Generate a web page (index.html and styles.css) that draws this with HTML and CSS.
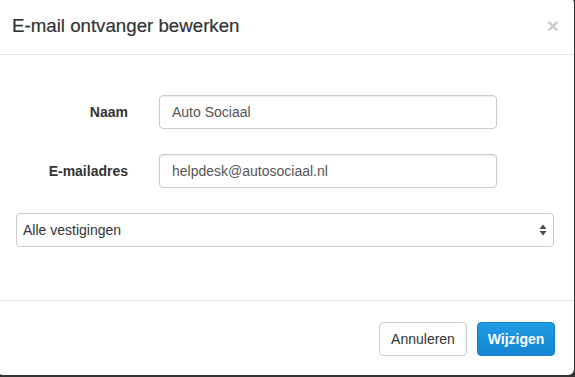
FILE: index.html
```html
<!DOCTYPE html>
<html lang="nl">
<head>
    <meta charset="UTF-8">
    <meta name="viewport" content="width=device-width, initial-scale=1.0">
    <title>E-mail ontvanger bewerken</title>
    <link rel="stylesheet" href="styles.css">
</head>
<body>
    <div class="modal">
        <div class="modal-header">
            <h4 class="modal-title">E-mail ontvanger bewerken</h4>
            <button class="close" type="button">&times;</button>
        </div>

        <div class="modal-body">
            <div class="form-row">
                <label for="naam">Naam</label>
                <input type="text" id="naam" value="Auto Sociaal">
            </div>

            <div class="form-row">
                <label for="email">E-mailadres</label>
                <input type="text" id="email" value="helpdesk@autosociaal.nl">
            </div>

            <div class="select-wrap">
                <select id="vestiging">
                    <option>Alle vestigingen</option>
                </select>
                <svg class="select-arrows" width="8" height="12" viewBox="0 0 8 12">
                    <path d="M4 0.5 L7.5 5 L0.5 5 Z" fill="#4a4a4a"/>
                    <path d="M4 11.5 L7.5 7 L0.5 7 Z" fill="#4a4a4a"/>
                </svg>
            </div>
        </div>

        <div class="modal-footer">
            <button class="btn btn-default" type="button">Annuleren</button>
            <button class="btn btn-primary" type="button">Wijzigen</button>
        </div>
    </div>
</body>
</html>
```

FILE: styles.css
```css
*{
    margin: 0;
    padding: 0;
    box-sizing: border-box;
}
body {
    font-family: "Liberation Sans", Arial, sans-serif;
    font-size: 14px;
    color: #333;
    background-color: #333;
    overflow: hidden;
}

.modal{
    width: 577px;
    margin: -3px 0 0 -3px;
    background-color: #fff;
    border-radius: 6px;
}

.modal-header{
    display: flex;
    justify-content: space-between;
    align-items: center;
    padding: 16px 15px 15px 15px;
    border-bottom: 1px solid #e5e5e5;
}
.modal-title{
    font-size: 18.7px;
    font-weight: 500;
    line-height: 26px;
    color: #333;
    -webkit-text-stroke: 0.2px #333;
}
.close{
    background: none;
    border: 0;
    font-family: "Liberation Sans", Arial, sans-serif;
    font-size: 21px;
    font-weight: 700;
    line-height: 1;
    color: #000;
    opacity: .2;
    margin-top: -2px;
}

.modal-body{
    padding: 40px 20px 53px 19px;
}
.form-row{
    display: grid;
    grid-template-columns: 128px 338px;
    column-gap: 15px;
    align-items: center;
    margin-bottom: 25px;
}
.form-row label{
    text-align: right;
    padding-right: 16px;
    font-weight: 700;
}
input, select{
    height: 34px;
    padding: 6px 12px;
    font-family: "Liberation Sans", Arial, sans-serif;
    font-size: 14px;
    color: #555;
    background-color: #fff;
    border: 1px solid #ccc;
    border-radius: 4px;
    box-shadow: inset 0 1px 1px rgba(0,0,0,.075);
}
input{
    width: 338px;
}

.select-wrap{
    position: relative;
}
.select-wrap select{
    width: 100%;
    padding: 6px 6px;
    appearance: none;
    -webkit-appearance: none;
    color: #333;
    box-shadow: none;
}
.select-arrows{
    position: absolute;
    right: 7px;
    top: 11px;
}

.modal-footer{
    display: flex;
    justify-content: flex-end;
    gap: 10px;
    padding: 21px 19px 19px;
    border-top: 1px solid #e5e5e5;
}
.btn{
    height: 34px;
    padding: 6px 0;
    font-family: "Liberation Sans", Arial, sans-serif;
    font-size: 14px;
    border-radius: 4px;
    cursor: pointer;
}
.btn-default{
    width: 88px;
    color: #333;
    background-color: #fff;
    border: 1px solid #ccc;
}
.btn-primary{
    width: 78px;
    color: #fff;
    font-weight: 700;
    background: linear-gradient(#1f9be2, #1486d3);
    border: 1px solid #1780c8;
}
```
